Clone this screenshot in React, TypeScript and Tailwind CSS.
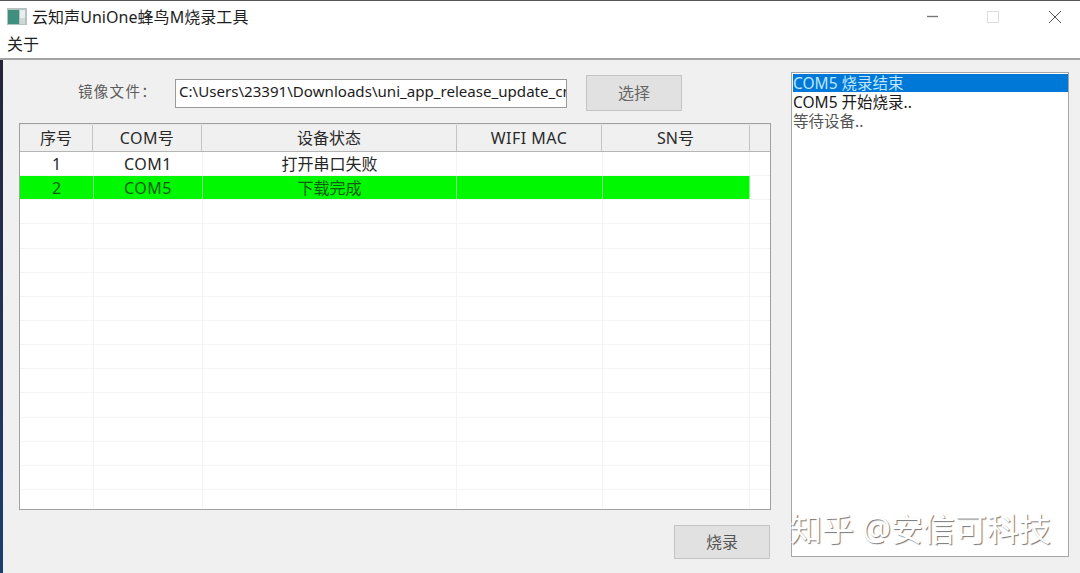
const font = "font-['Noto_Sans','Noto_Sans_CJK_SC',sans-serif]";
const headerWidths = [73, 109, 255, 145, 148];
const rowWidths = [74, 109, 254, 146, 147];
const headers: [string, string][] = [
  ["序号", ""],
  ["COM号", "tracking-[0.4px]"],
  ["设备状态", ""],
  ["WIFI MAC", "tracking-[0.5px]"],
  ["SN号", ""],
];
const rows = [
  ["1", "COM1", "打开串口失败", "", ""],
  ["2", "COM5", "下载完成", "", ""],
  ...Array.from({ length: 13 }, () => ["", "", "", "", ""]),
];

function Row({ cells, index }: { cells: string[]; index: number }) {
  const green = index === 1;
  return (
    <div className="flex h-[24.15px] shrink-0 border-b border-[#f4f4f4]">
      {cells.map((c, i) => (
        <div
          key={i}
          style={{ width: rowWidths[i] }}
          className={`flex items-center justify-center border-r text-[16px] ${i === 1 ? "tracking-[0.5px]" : ""} ${
            green ? "border-[#7dfb7d] bg-[#00f800] text-[#0c5c10]" : "border-[#f4f4f4] text-[#262626]"
          }`}
        >
          {c}
        </div>
      ))}
    </div>
  );
}

export default function App() {
  return (
    <div className={`relative flex h-[573px] w-[1080px] flex-col overflow-hidden bg-[#f0f0f0] ${font}`}>
      <div className="h-px bg-[#555]" />
      <header className="flex h-[31px] items-center bg-white pl-[7px]">
        <svg width="20" height="17" viewBox="0 0 20 17" className="shrink-0">
          <rect width="20" height="17" fill="#b5c4c0" />
          <rect x="1" y="2" width="11" height="14" fill="#3f8f7f" />
          <rect x="13" y="2" width="5" height="8" fill="#e8eeee" />
          <rect x="13" y="10" width="5" height="6" fill="#cfd8d6" />
        </svg>
        <span className="mt-px ml-[5px] text-[16px] leading-none tracking-[0.05px] text-[#1e1e1e]">云知声UniOne蜂鸟M烧录工具</span>
        <div className="ml-auto flex items-center">
          <svg width="14" height="14" viewBox="0 0 14 14" className="mr-[46px]"><path d="M1 6.5h11" stroke="#777" strokeWidth="1.4" /></svg>
          <svg width="14" height="14" viewBox="0 0 14 14" className="mr-[48px]"><rect x="1.5" y="1.5" width="11" height="11" fill="none" stroke="#ddd" /></svg>
          <svg width="14" height="14" viewBox="0 0 14 14" className="mr-[18px]"><path d="M1 1l12 12M13 1L1 13" stroke="#555" strokeWidth="1" /></svg>
        </div>
      </header>
      <nav className="flex h-[26px] items-center bg-white pb-[2px] pl-[7px] text-[16px] text-[#222]">关于</nav>
      <div className="h-[2px] bg-[#a3a3a3]" />
      <main className="flex min-h-0 flex-1">
        <div className="w-[3px] shrink-0 bg-gradient-to-b from-[#25233a] to-[#1b3f70]" />
        <section className="ml-[16px] flex w-[752px] shrink-0 flex-col">
          <div className="mt-[15px] flex h-[36px] items-center">
            <span className="mb-[2px] ml-[59px] w-[97px] text-[14.5px] tracking-[1.3px] text-[#5a5a5a]">镜像文件：</span>
            <div className="flex h-[29px] w-[392px] items-center overflow-hidden whitespace-nowrap border border-[#9a9a9a] bg-white pb-[4px] pl-[3px] text-[15.1px] text-[#1c1c1c]">
              C:\Users\23391\Downloads\uni_app_release_update_cn
            </div>
            <button className="ml-[19px] h-[36px] w-[96px] border border-[#c4c4c4] bg-[#e1e1e1] pb-px text-[16px] text-[#666]">选择</button>
          </div>
          <div className="mt-[12px] flex h-[387px] flex-col overflow-hidden border border-[#a0a0a0] bg-white">
            <div className="flex h-[28px] shrink-0 border-y border-b-[#b5b5b5] border-t-[#e8e8e8] bg-[#f0f0f0]">
              {headers.map(([h, cls], i) => (
                <div
                  key={h}
                  style={{ width: headerWidths[i] }}
                  className={`flex items-center justify-center border-r border-[#c4c4c4] text-[16px] text-[#2a2a2a] ${cls}`}
                >
                  {h}
                </div>
              ))}
              <div className="flex-1" />
            </div>
            {rows.map((r, i) => (
              <Row key={i} cells={r} index={i} />
            ))}
          </div>
          <button className="mt-[15px] mr-[1px] h-[34px] w-[96px] self-end border border-[#c4c4c4] bg-[#e1e1e1] text-[16px] text-[#555]">烧录</button>
        </section>
        <aside className="mt-[12px] ml-[20px] flex h-[485px] w-[278px] flex-col border border-[#a6a6a6] bg-white pl-px pt-px text-[15.5px] leading-[19px] text-[#333]">
          <div className="h-[18px] bg-[#0078d7] leading-[18px] text-[#bfe6ff]">COM5 烧录结束</div>
          <div className="mt-px text-[#1a1a1a]">COM5 开始烧录..</div>
          <div className="text-[#555]">等待设备..</div>
        </aside>
      </main>
      <div className="absolute left-[790px] top-[508px] whitespace-nowrap text-[32px] leading-[42px] text-white [text-shadow:1px_1px_1px_#777]">
        知乎 @安信可科技
      </div>
    </div>
  );
}
